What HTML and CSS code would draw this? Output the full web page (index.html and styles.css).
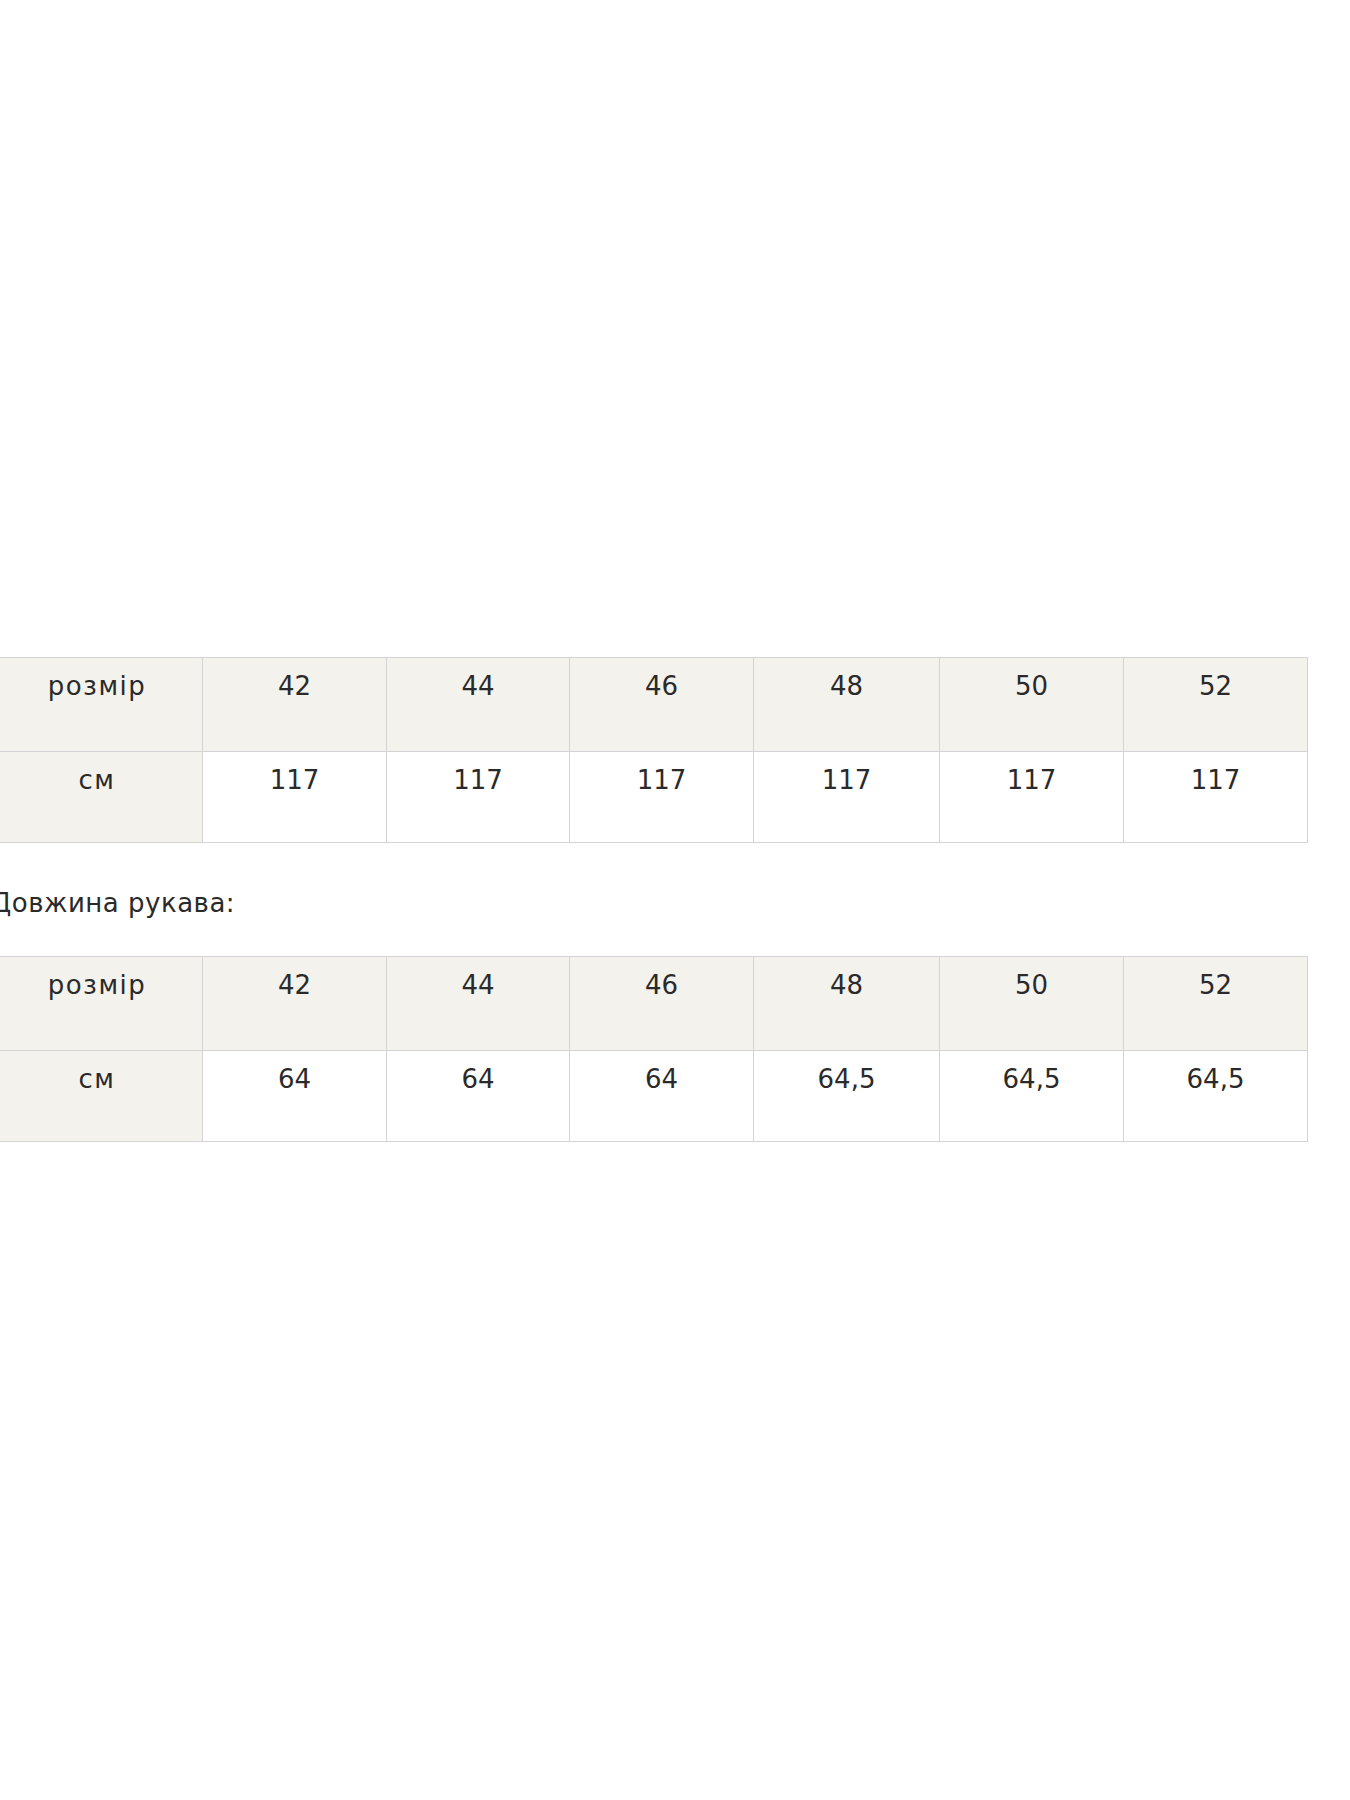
FILE: index.html
```html
<!DOCTYPE html>
<html lang="uk">
<head>
<meta charset="utf-8">
<title>Розміри</title>
<link rel="stylesheet" href="styles.css">
</head>
<body>
<div class="content">
  <table class="sizes">
    <colgroup>
      <col class="c-label"><col class="c-val"><col class="c-narrow"><col class="c-val"><col class="c-wide"><col class="c-val"><col class="c-val">
    </colgroup>
    <tr class="head">
      <td class="label">розмір</td><td>42</td><td>44</td><td>46</td><td>48</td><td>50</td><td>52</td>
    </tr>
    <tr>
      <td class="label">см</td><td>117</td><td>117</td><td>117</td><td>117</td><td>117</td><td>117</td>
    </tr>
  </table>
  <p class="caption">Довжина рукава:</p>
  <table class="sizes">
    <colgroup>
      <col class="c-label"><col class="c-val"><col class="c-narrow"><col class="c-val"><col class="c-wide"><col class="c-val"><col class="c-val">
    </colgroup>
    <tr class="head">
      <td class="label">розмір</td><td>42</td><td>44</td><td>46</td><td>48</td><td>50</td><td>52</td>
    </tr>
    <tr>
      <td class="label">см</td><td>64</td><td>64</td><td>64</td><td>64,5</td><td>64,5</td><td>64,5</td>
    </tr>
  </table>
</div>
</body>
</html>
```
FILE: styles.css
```css
html, body {
  margin: 0;
  padding: 0;
  background: #ffffff;
}
body {
  font-family: "DejaVu Sans", Verdana, sans-serif;
  color: #2a2a2a;
}
.content {
  margin-left: -9px;
  padding-top: 657px;
  width: 1316px;
}
.sizes {
  width: 1316px;
  border-collapse: collapse;
  table-layout: fixed;
  font-size: 26px;
  line-height: 30px;
}
.sizes col.c-label {
  width: 211px;
}
.sizes col.c-val {
  width: 184px;
}
.sizes col.c-narrow {
  width: 183px;
}
.sizes col.c-wide {
  width: 186px;
}
.sizes td {
  box-sizing: border-box;
  border: 1px solid #d4d4d4;
  text-align: center;
  vertical-align: top;
  padding: 13px 0 0;
  height: 91px;
}
.sizes tr.head td {
  background: #f4f2ed;
  height: 94px;
}
.sizes td.label {
  background: #f4f2ed;
  letter-spacing: 1.5px;
}
.caption {
  margin: 45px 0 0;
  font-size: 26px;
  line-height: 30px;
  height: 68px;
  letter-spacing: 0.5px;
}
```
